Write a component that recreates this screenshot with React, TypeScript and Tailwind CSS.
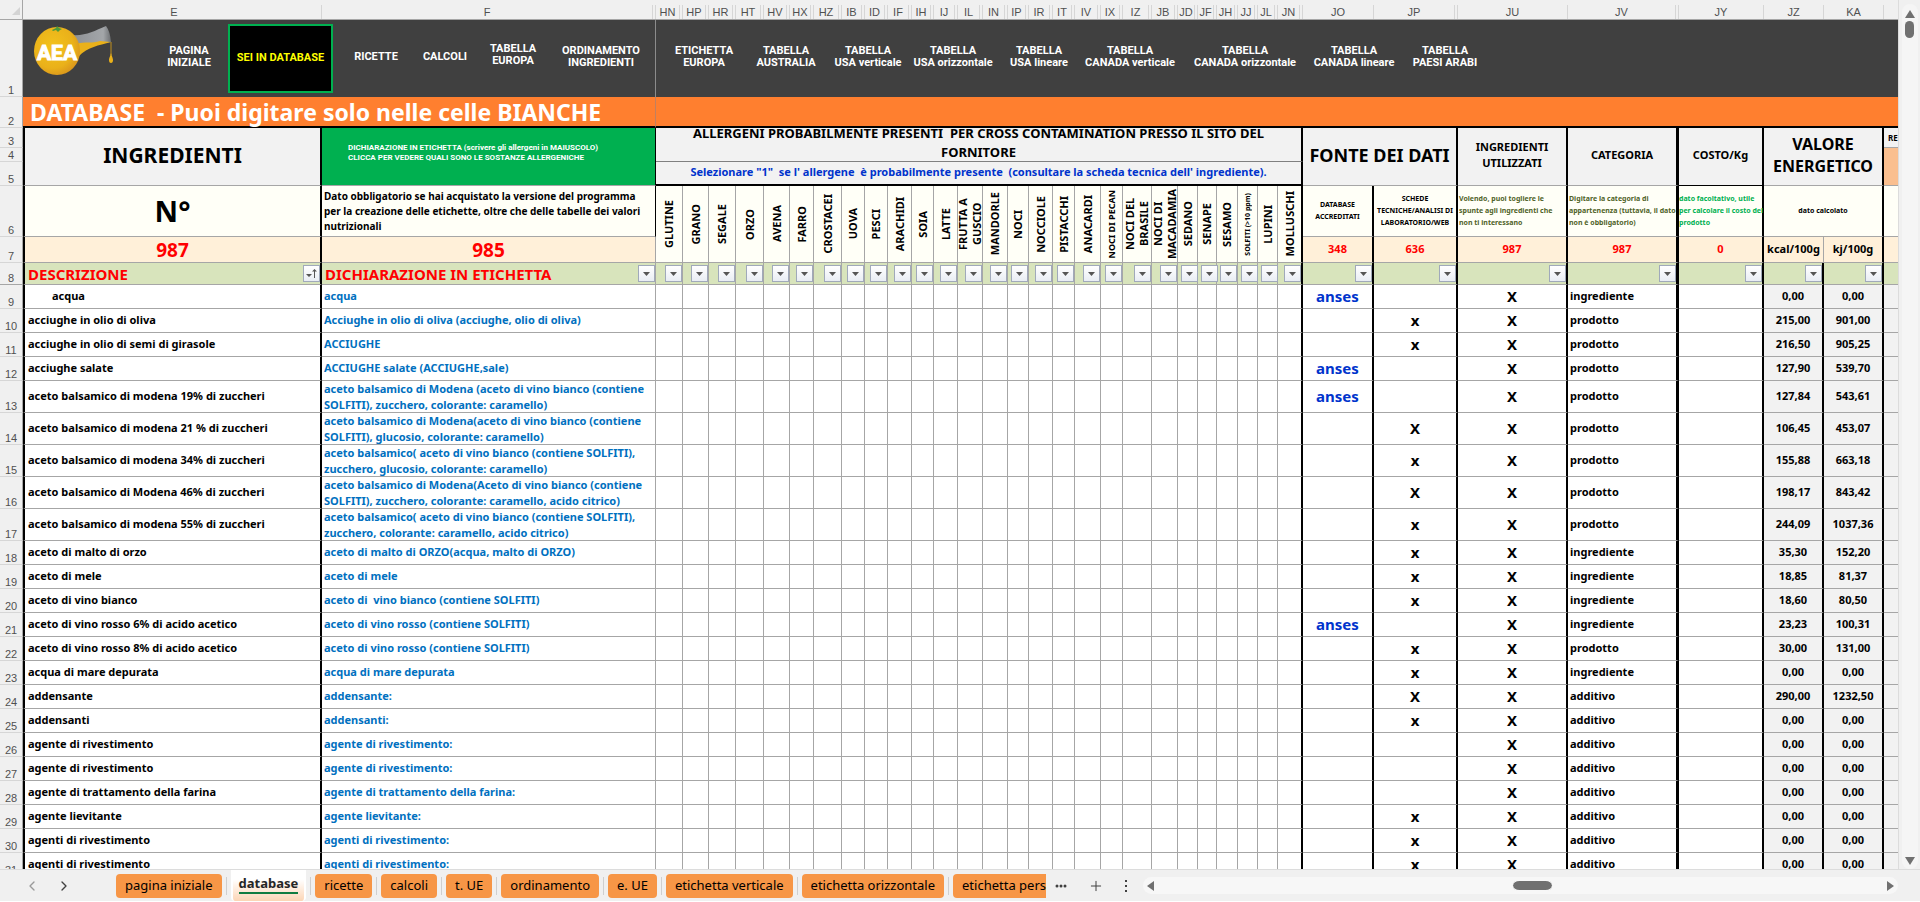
import React from "react";
import { ChevronLeft, ChevronRight, Plus } from "lucide-react";

type Allergen = { col: string; name: string; width: string; text?: string };

const ALLERGENS: Allergen[] = [
  { col: "HN", name: "GLUTINE", width: "w-[27px]" },
  { col: "HP", name: "GRANO", width: "w-[26px]" },
  { col: "HR", name: "SEGALE", width: "w-[27px]" },
  { col: "HT", name: "ORZO", width: "w-[28px]" },
  { col: "HV", name: "AVENA", width: "w-[26px]" },
  { col: "HX", name: "FARRO", width: "w-[24px]" },
  { col: "HZ", name: "CROSTACEI", width: "w-[28px]" },
  { col: "IB", name: "UOVA", width: "w-[23px]" },
  { col: "ID", name: "PESCI", width: "w-[23px]" },
  { col: "IF", name: "ARACHIDI", width: "w-[24px]" },
  { col: "IH", name: "SOIA", width: "w-[22px]" },
  { col: "IJ", name: "LATTE", width: "w-[24px]" },
  { col: "IL", name: "FRUTTA A GUSCIO", width: "w-[25px]" },
  { col: "IN", name: "MANDORLE", width: "w-[25px]" },
  { col: "IP", name: "NOCI", width: "w-[21px]" },
  { col: "IR", name: "NOCCIOLE", width: "w-[24px]" },
  { col: "IT", name: "PISTACCHI", width: "w-[22px]" },
  { col: "IV", name: "ANACARDI", width: "w-[26px]" },
  { col: "IX", name: "NOCI DI PECAN", width: "w-[22px]", text: "text-[9px] font-bold whitespace-nowrap" },
  { col: "IZ", name: "NOCI DEL BRASILE", width: "w-[29px]" },
  { col: "JB", name: "NOCI DI MACADAMIA", width: "w-[26px]" },
  { col: "JD", name: "SEDANO", width: "w-[20px]" },
  { col: "JF", name: "SENAPE", width: "w-[19px]" },
  { col: "JH", name: "SESAMO", width: "w-[21px]" },
  { col: "JJ", name: "SOLFITI (>10 ppm)", width: "w-[20px]", text: "text-[7px] font-bold whitespace-nowrap" },
  { col: "JL", name: "LUPINI", width: "w-[20px]" },
  { col: "JN", name: "MOLLUSCHI", width: "w-[25px]" },
];

const DATA_COLS = [
  { col: "JO", width: "w-[71px]" },
  { col: "JP", width: "w-[84px]" },
  { col: "JU", width: "w-[110px]" },
  { col: "JV", width: "w-[111px]" },
  { col: "JY", width: "w-[85px]" },
  { col: "JZ", width: "w-[60px]" },
  { col: "KA", width: "w-[60px]" },
];

type Row = [desc: string, label: string, anses: boolean, lab: string, cat: string, kcal: string, kj: string];

const ROWS: Row[] = [
  ["acqua", "acqua", true, "", "ingrediente", "0,00", "0,00"],
  ["acciughe in olio di oliva", "Acciughe in olio di oliva (acciughe, olio di oliva)", false, "x", "prodotto", "215,00", "901,00"],
  ["acciughe in olio di semi di girasole", "ACCIUGHE", false, "x", "prodotto", "216,50", "905,25"],
  ["acciughe salate", "ACCIUGHE salate (ACCIUGHE,sale)", true, "", "prodotto", "127,90", "539,70"],
  ["aceto balsamico di modena 19% di zuccheri", "aceto balsamico di Modena (aceto di vino bianco (contiene\nSOLFITI), zucchero, colorante: caramello)", true, "", "prodotto", "127,84", "543,61"],
  ["aceto balsamico di modena 21 % di zuccheri", "aceto balsamico di Modena(aceto di vino bianco (contiene\nSOLFITI), glucosio, colorante: caramello)", false, "X", "prodotto", "106,45", "453,07"],
  ["aceto balsamico di modena 34% di zuccheri", "aceto balsamico( aceto di vino bianco (contiene SOLFITI),\nzucchero, glucosio, colorante: caramello)", false, "x", "prodotto", "155,88", "663,18"],
  ["aceto balsamico di Modena 46% di zuccheri", "aceto balsamico di Modena(Aceto di vino bianco (contiene\nSOLFITI), zucchero, colorante: caramello, acido citrico)", false, "X", "prodotto", "198,17", "843,42"],
  ["aceto balsamico di modena 55% di zuccheri", "aceto balsamico( aceto di vino bianco (contiene SOLFITI),\nzucchero, colorante: caramello, acido citrico)", false, "x", "prodotto", "244,09", "1037,36"],
  ["aceto di malto di orzo", "aceto di malto di ORZO(acqua, malto di ORZO)", false, "x", "ingrediente", "35,30", "152,20"],
  ["aceto di mele", "aceto di mele", false, "x", "ingrediente", "18,85", "81,37"],
  ["aceto di vino bianco", "aceto di  vino bianco (contiene SOLFITI)", false, "x", "ingrediente", "18,60", "80,50"],
  ["aceto di vino rosso 6% di acido acetico", "aceto di vino rosso (contiene SOLFITI)", true, "", "ingrediente", "23,23", "100,31"],
  ["aceto di vino rosso 8% di acido acetico", "aceto di vino rosso (contiene SOLFITI)", false, "x", "prodotto", "30,00", "131,00"],
  ["acqua di mare depurata", "acqua di mare depurata", false, "x", "ingrediente", "0,00", "0,00"],
  ["addensante", "addensante:", false, "X", "additivo", "290,00", "1232,50"],
  ["addensanti", "addensanti:", false, "x", "additivo", "0,00", "0,00"],
  ["agente di rivestimento", "agente di rivestimento:", false, "", "additivo", "0,00", "0,00"],
  ["agente di rivestimento", "agente di rivestimento:", false, "", "additivo", "0,00", "0,00"],
  ["agente di trattamento della farina", "agente di trattamento della farina:", false, "", "additivo", "0,00", "0,00"],
  ["agente lievitante", "agente lievitante:", false, "x", "additivo", "0,00", "0,00"],
  ["agenti di rivestimento", "agenti di rivestimento:", false, "x", "additivo", "0,00", "0,00"],
  ["agenti di rivestimento", "agenti di rivestimento:", false, "x", "additivo", "0,00", "0,00"],
];

const NAV_RIGHT: { lines: string[]; width: string }[] = [
  { lines: ["ETICHETTA", "EUROPA"], width: "w-[88px]" },
  { lines: ["TABELLA", "AUSTRALIA"], width: "w-[76px]" },
  { lines: ["TABELLA", "USA verticale"], width: "w-[88px]" },
  { lines: ["TABELLA", "USA orizzontale"], width: "w-[82px]" },
  { lines: ["TABELLA", "USA lineare"], width: "w-[90px]" },
  { lines: ["TABELLA", "CANADA verticale"], width: "w-[92px]" },
  { lines: ["TABELLA", "CANADA orizzontale"], width: "w-[138px]" },
  { lines: ["TABELLA", "CANADA lineare"], width: "w-[80px]" },
  { lines: ["TABELLA", "PAESI ARABI"], width: "w-[102px]" },
];

const SHEETS = ["ricette", "calcoli", "t. UE", "ordinamento", "e. UE", "etichetta verticale", "etichetta orizzontale"];

const LINE = "border-[#a6a6a6]";

function NavLink({ lines, width }: { lines: string[]; width: string }) {
  return (
    <a
      href="#"
      className={`flex shrink-0 flex-col items-center whitespace-nowrap font-['Roboto',sans-serif] text-[11px] leading-[12px] font-bold text-white ${width}`}
    >
      {lines.map((l) => (
        <span key={l}>{l}</span>
      ))}
    </a>
  );
}

function Logo() {
  return (
    <svg className="h-[56px] w-[84px]" viewBox="0 0 84 56" role="img" aria-label="AEA">
      <defs>
        <radialGradient id="orange" cx="0.4" cy="0.4" r="0.65">
          <stop offset="0" stopColor="#f3c21c" />
          <stop offset="0.7" stopColor="#eab11a" />
          <stop offset="1" stopColor="#d9951c" />
        </radialGradient>
        <linearGradient id="glass" x1="0" y1="0" x2="1" y2="0">
          <stop offset="0" stopColor="#8d9094" />
          <stop offset="0.8" stopColor="#a3a6a9" />
          <stop offset="1" stopColor="#6d7073" />
        </linearGradient>
      </defs>
      <path d="M40 10 C54 11 62 6 74 1 Q78 6 79 17 Q62 20 44 22 Z" fill="url(#glass)" />
      <path d="M43 19 C54 16 60 19 68 16 L79 17 C66 21 57 21 46 32 Z" fill="#eab11a" />
      <ellipse cx="25" cy="26" rx="23" ry="24" fill="url(#orange)" />
      <path d="M20 5 L24 3 L25 1 L27 3 L30 4 L28 5 L26 7 L24 5 L21 6 Z" fill="#4b9b3b" />
      <path d="M79 17 L79 30" stroke="#c08f1c" strokeWidth="1" />
      <path d="M79 28 C80 32 81 33 81 35 A2 3 0 0 1 77 35 C77 33 78 32 79 28 Z" fill="#eab11a" />
      <text
        x="25"
        y="35"
        fontSize="21"
        fill="#fff"
        stroke="#fff"
        strokeWidth="1"
        textAnchor="middle"
        fontFamily="'Liberation Sans Narrow', Roboto, sans-serif"
        fontWeight="700"
      >
        AEA
      </text>
    </svg>
  );
}

function FilterButton({ label, sorted }: { label: string; sorted?: boolean }) {
  return (
    <button
      type="button"
      aria-label={`Filtro ${label}`}
      className="flex h-[17px] w-[17px] shrink-0 items-center justify-center border border-[#a0a9ba] bg-linear-to-b from-white to-[#e9edf4]"
    >
      {sorted ? (
        <svg width="11" height="11" viewBox="0 0 11 11" fill="#555">
          <path d="M0 6h6L3 9zM8 3h1v7H8zM6 3.500L8.500 1l2.500 2.500z" />
        </svg>
      ) : (
        <svg width="7" height="4" viewBox="0 0 7 4" fill="#555">
          <path d="M0 0h7L3.500 4z" />
        </svg>
      )}
    </button>
  );
}

function FilterCell({ label, className, children, sorted }: { label: string; className: string; children?: React.ReactNode; sorted?: boolean }) {
  return (
    <td className={`border-b bg-[#d8e4bc] p-0 align-middle ${LINE} ${className}`}>
      <div className="flex items-center justify-between">
        <span className="pl-[3px] text-[15px] leading-[18px] font-bold whitespace-nowrap text-[#ff0000]">{children}</span>
        <FilterButton label={label} sorted={sorted} />
      </div>
    </td>
  );
}

function RowHead({ n, height, last }: { n: number; height: string; last?: boolean }) {
  return (
    <th
      scope="row"
      className={`border-r border-b border-r-[#a6a6a6] bg-[#f0f0f0] p-0 text-center align-bottom font-['Liberation_Sans',sans-serif] text-[11px] leading-[12px] font-normal text-[#505050] ${height} ${last ? "border-b-[#a6a6a6]" : "border-b-[#d6d6d6]"}`}
    >
      {n}
    </th>
  );
}

function ColHead({ name, split, className = "" }: { name: string; split?: boolean; className?: string }) {
  return (
    <th
      scope="col"
      className={`h-[20px] border-b border-b-[#a6a6a6] bg-[#f0f0f0] p-0 align-bottom font-['Liberation_Sans',sans-serif] text-[11px] leading-[14px] font-normal text-[#505050] ${className}`}
    >
      <div className="flex h-[14px] justify-end">
        <span className={`min-w-0 flex-1 border-r border-[#d6d6d6] text-center ${split ? "mr-[2px]" : ""}`}>
          <span className="flex justify-center">{name}</span>
        </span>
        {split && <span className="w-px bg-[#d6d6d6]" />}
      </div>
    </th>
  );
}

const HEAD = "border-b bg-[#f2f2f2] p-0 pb-[3px] text-center align-middle font-bold";
const NOTE = "border-b bg-[#fffff7] p-0 align-middle font-bold";
const COUNT = "border-b bg-[#fff0d9] p-0 text-center align-middle font-bold";

export default function App() {
  return (
    <div className="flex h-screen flex-col overflow-hidden bg-white font-['Noto_Sans',sans-serif] text-black">
      <div className="flex min-h-0 flex-1 border-b border-[#dcdcdc] bg-[#f0f0f0]">
        <main className="min-w-0 flex-1 overflow-hidden bg-white">
          <table className="w-full table-fixed border-separate border-spacing-0">
            <colgroup>
              <col className="w-[23px]" />
              <col className="w-[299px]" />
              <col className="w-[334px]" />
              {ALLERGENS.map((a) => (
                <col key={a.col} className={a.width} />
              ))}
              {DATA_COLS.map((c) => (
                <col key={c.col} className={c.width} />
              ))}
              <col />
            </colgroup>
            <thead>
              <tr>
                <td className="h-[20px] border-r border-b border-[#a6a6a6] bg-[#f0f0f0] p-0 align-bottom">
                  <svg className="mb-1 ml-3" width="8" height="8" viewBox="0 0 8 8" fill="#d4d4d4">
                    <path d="M8 0v8H0z" />
                  </svg>
                </td>
                <ColHead name="E" className="pl-1!" />
                <ColHead name="F" split />
                {ALLERGENS.map((a) => (
                  <ColHead key={a.col} name={a.col} split />
                ))}
                {DATA_COLS.map((c) => (
                  <ColHead key={c.col} name={c.col} split={c.col === "JP" || c.col === "JV"} />
                ))}
                <td className="border-b border-[#a6a6a6] bg-[#f0f0f0] p-0" />
              </tr>
            </thead>
            <tbody>
              <tr>
                <RowHead n={1} height="h-[77px]" />
                <td colSpan={2} className="border-r border-[#8c8c8c] bg-[#404040] p-0 align-middle">
                  <nav className="flex items-center">
                    <div className="w-[127px] shrink-0 pb-3 pl-[9px]">
                      <Logo />
                    </div>
                    <NavLink lines={["PAGINA", "INIZIALE"]} width="w-[78px] pb-1" />
                    <div className="flex w-[109px] shrink-0 justify-center pr-1">
                      <a
                        href="#"
                        className="flex h-[69px] w-[105px] items-center justify-center border-2 border-[#00b050] bg-black font-['Roboto',sans-serif] text-[11px] font-bold whitespace-nowrap text-[#ffff00]"
                      >
                        SEI IN DATABASE
                      </a>
                    </div>
                    <NavLink lines={["RICETTE"]} width="w-[78px] pb-1" />
                    <NavLink lines={["CALCOLI"]} width="w-[60px] pb-1" />
                    <NavLink lines={["TABELLA", "EUROPA"]} width="w-[76px] pb-2" />
                    <NavLink lines={["ORDINAMENTO", "INGREDIENTI"]} width="w-[100px] pb-1" />
                  </nav>
                </td>
                <td colSpan={35} className="bg-[#404040] p-0 align-middle">
                  <nav className="flex items-center pb-1 pl-1">
                    {NAV_RIGHT.map((n) => (
                      <NavLink key={n.lines[1]} {...n} />
                    ))}
                  </nav>
                </td>
              </tr>
              <tr>
                <RowHead n={2} height="h-[31px]" />
                <td colSpan={2} className="border-r border-b-2 border-r-[#c08060] border-b-black bg-[#ff7f2f] p-0 pl-[7px] align-middle">
                  <h1 className="text-[23px] leading-[28px] font-bold whitespace-pre text-white">DATABASE  - Puoi digitare solo nelle celle BIANCHE</h1>
                </td>
                <td colSpan={35} className="border-b-2 border-black bg-[#ff7f2f] p-0" />
              </tr>
              <tr>
                <RowHead n={3} height="h-[20px]" />
                <td rowSpan={3} className={`border-x-2 border-x-black border-b-[#a6a6a6] text-[21px] leading-[28px] ${HEAD}`}>
                  INGREDIENTI
                </td>
                <td rowSpan={3} className="border-r border-b border-r-black border-b-[#a6a6a6] bg-[#00b050] p-0 align-middle">
                  <a href="#" className="block pb-2 pl-[26px] font-['Roboto',sans-serif] text-[8px] leading-[10px] font-bold whitespace-nowrap text-white">
                    DICHIARAZIONE IN ETICHETTA (scrivere gli allergeni in MAIUSCOLO)
                    <br />
                    CLICCA PER VEDERE QUALI SONO LE SOSTANZE ALLERGENICHE
                  </a>
                </td>
                <td rowSpan={2} colSpan={27} className={`border-r-2 border-r-black border-b-[#808080] text-[13px] leading-[19px] ${HEAD}`}>
                  <div className="flex h-[30px] items-center justify-center whitespace-pre">
                    <span>
                      ALLERGENI PROBABILMENTE PRESENTI{"  "}PER CROSS CONTAMINATION PRESSO IL SITO DEL
                      <br />
                      FORNITORE
                    </span>
                  </div>
                </td>
                <td rowSpan={3} colSpan={2} className={`border-r-2 border-r-black border-b-[#a6a6a6] text-[18px] leading-[24px] ${HEAD}`}>
                  FONTE DEI DATI
                </td>
                <td rowSpan={3} className={`border-r-2 border-r-black border-b-[#a6a6a6] text-[11px] leading-[16px] ${HEAD}`}>
                  INGREDIENTI
                  <br />
                  UTILIZZATI
                </td>
                <td rowSpan={3} className={`border-r-3 border-r-black border-b-[#a6a6a6] text-[11px] leading-[16px] ${HEAD}`}>CATEGORIA</td>
                <td rowSpan={3} className={`border-r-2 border-r-black border-b-black text-[11px] leading-[16px] ${HEAD}`}>COSTO/Kg</td>
                <td rowSpan={3} colSpan={2} className={`border-r-2 border-r-black border-b-[#a6a6a6] text-[16px] leading-[22px] ${HEAD}`}>
                  VALORE
                  <br />
                  ENERGETICO
                </td>
                <td className="overflow-hidden border-b border-[#a6a6a6] bg-[#f2f2f2] p-0 pl-1 text-[8px] leading-[14px] font-bold">RE</td>
              </tr>
              <tr>
                <RowHead n={4} height="h-[14px]" />
                <td rowSpan={2} className="border-b border-[#a6a6a6] bg-[#fabf8f] p-0" />
              </tr>
              <tr>
                <RowHead n={5} height="h-[24px]" />
                <td colSpan={27} className={`border-r-2 border-b-2! border-black text-[11px] leading-[18px] whitespace-pre text-[#0033cc] ${HEAD}`}>
                  Selezionare "1"  se l' allergene  è probabilmente presente  (consultare la scheda tecnica dell' ingrediente).
                </td>
              </tr>
              <tr>
                <RowHead n={6} height="h-[51px]" />
                <td className={`border-x-2 border-x-black border-b-[#a6a6a6] text-center text-[29px] leading-[40px] ${NOTE}`}>N°</td>
                <td className={`border-r border-r-black border-b-[#a6a6a6] pl-0.5! text-[10px] leading-[15px] whitespace-nowrap ${NOTE}`}>
                  Dato obbligatorio se hai acquistato la versione del programma
                  <br />
                  per la creazione delle etichette, oltre che delle tabelle dei valori
                  <br />
                  nutrizionali
                </td>
                {ALLERGENS.map((a, i) => (
                  <th
                    key={a.col}
                    rowSpan={2}
                    scope="col"
                    className={`border-b bg-[#fffff7] p-0 align-middle ${LINE} ${i === 26 ? "border-r-2 border-r-black" : "border-r"}`}
                  >
                    <div className="flex h-[74px] items-center justify-center">
                      <span className={`max-h-[74px] rotate-180 text-center leading-[14px] [writing-mode:vertical-rl] ${a.text ?? "text-[11px] font-bold"}`}>
                        {a.name}
                      </span>
                    </div>
                  </th>
                ))}
                <td className={`border-r-2 border-r-black border-b-[#a6a6a6] text-center text-[7px] leading-[12px] ${NOTE}`}>
                  DATABASE
                  <br />
                  ACCREDITATI
                </td>
                <td className={`border-r-2 border-r-black border-b-[#a6a6a6] text-center text-[7px] leading-[12px] whitespace-nowrap ${NOTE}`}>
                  SCHEDE
                  <br />
                  TECNICHE/ANALISI DI
                  <br />
                  LABORATORIO/WEB
                </td>
                <td className={`border-r-2 border-r-black border-b-[#a6a6a6] pl-px! text-[7px] leading-[12px] whitespace-nowrap text-[#4f6228] ${NOTE}`}>
                  Volendo, puoi togliere le
                  <br />
                  spunte agli ingredienti che
                  <br />
                  non ti interessano
                </td>
                <td className={`border-r-3 border-r-black border-b-[#a6a6a6] pl-px! text-[7px] leading-[12px] whitespace-nowrap text-[#4f6228] ${NOTE}`}>
                  Digitare la categoria di
                  <br />
                  appartenenza (tuttavia, il dato
                  <br />
                  non è obbligatorio)
                </td>
                <td className={`border-r-2 border-r-black border-b-[#a6a6a6] text-[7px] leading-[12px] whitespace-nowrap text-[#00b050] ${NOTE}`}>
                  dato facoltativo, utile
                  <br />
                  per calcolare il costo del
                  <br />
                  prodotto
                </td>
                <td colSpan={2} className={`border-r-2 border-r-black border-b-[#a6a6a6] text-center text-[7px] ${NOTE}`}>
                  dato calcolato
                </td>
                <td className={`border-b-[#a6a6a6] ${NOTE}`} />
              </tr>
              <tr>
                <RowHead n={7} height="h-[26px]" />
                <td className={`border-x-2 border-x-black border-b-[#a6a6a6] text-[19px] leading-[24px] text-[#ff0000] ${COUNT}`}>987</td>
                <td className={`border-r border-[#a6a6a6] text-[19px] leading-[24px] text-[#ff0000] ${COUNT}`}>985</td>
                <td className={`border-r-2 border-r-black border-b-[#a6a6a6] text-[11px] text-[#ff0000] ${COUNT}`}>348</td>
                <td className={`border-r-2 border-r-black border-b-[#a6a6a6] text-[11px] text-[#ff0000] ${COUNT}`}>636</td>
                <td className={`border-r-2 border-r-black border-b-[#a6a6a6] text-[11px] text-[#ff0000] ${COUNT}`}>987</td>
                <td className={`border-r-3 border-r-black border-b-[#a6a6a6] text-[11px] text-[#ff0000] ${COUNT}`}>987</td>
                <td className={`border-r-2 border-r-black border-b-[#a6a6a6] text-[11px] text-[#ff0000] ${COUNT}`}>0</td>
                <td className={`border-r border-[#a6a6a6] text-[11px] ${COUNT}`}>kcal/100g</td>
                <td className={`border-r-2 border-r-black border-b-[#a6a6a6] text-[11px] ${COUNT}`}>kj/100g</td>
                <td className={`border-b-[#a6a6a6] ${COUNT}`} />
              </tr>
              <tr>
                <RowHead n={8} height="h-[22px]" last />
                <FilterCell label="descrizione" className="border-x-2 border-x-black" sorted>
                  DESCRIZIONE
                </FilterCell>
                <FilterCell label="dichiarazione in etichetta" className="border-r">
                  DICHIARAZIONE IN ETICHETTA
                </FilterCell>
                {ALLERGENS.map((a, i) => (
                  <FilterCell key={a.col} label={a.name} className={i === 26 ? "border-r-2 border-r-black" : "border-r"} />
                ))}
                {DATA_COLS.map((c) => (
                  <FilterCell key={c.col} label={c.col} className={c.col === "JV" ? "border-r-3 border-r-black" : "border-r-2 border-r-black"} />
                ))}
                <td className="border-b border-[#a6a6a6] bg-[#d8e4bc] p-0" />
              </tr>
              {ROWS.map(([desc, label, anses, lab, cat, kcal, kj], r) => {
                const cell = "border-b border-b-[#a6a6a6] p-0 pb-[2px] align-middle font-bold text-[11px] leading-[16px]";
                return (
                  <tr key={r}>
                    <RowHead n={r + 9} height={label.includes("\n") ? "h-[32px]" : "h-[24px]"} />
                    <td className={`border-x-2 border-x-black ${cell} ${r === 0 ? "pl-[27px]!" : "pl-[3px]!"}`}>{desc}</td>
                    <td className={`border-r border-r-[#a6a6a6] pl-0.5! whitespace-pre text-[#0070c0] ${cell}`}>
                      <div className="max-h-[29px]">{label}</div>
                    </td>
                    {ALLERGENS.map((a, i) => (
                      <td key={a.col} className={`${cell} ${i === 26 ? "border-r-2 border-r-black" : "border-r border-r-[#a6a6a6]"}`} />
                    ))}
                    <td className={`border-r-2 border-r-black text-center text-[15px]! text-[#0033cc] ${cell}`}>{anses ? "anses" : ""}</td>
                    <td className={`border-r-2 border-r-black text-center text-[15px]! ${cell}`}>{lab}</td>
                    <td className={`border-r-2 border-r-black text-center text-[15px]! ${cell}`}>X</td>
                    <td className={`border-r-3 border-r-black pl-0.5! ${cell}`}>{cat}</td>
                    <td className={`border-r-2 border-r-black ${cell}`} />
                    <td className={`border-r-2 border-r-black bg-[#f2f2f2] text-center ${cell}`}>{kcal}</td>
                    <td className={`border-r-2 border-r-black bg-[#f2f2f2] text-center ${cell}`}>{kj}</td>
                    <td className={`bg-[#f2f2f2] ${cell}`} />
                  </tr>
                );
              })}
            </tbody>
          </table>
        </main>
        <aside className="flex w-[22px] shrink-0 flex-col items-center border-l border-[#dcdcdc] pt-1">
          <div className="flex w-4 flex-1 flex-col items-center rounded-full bg-[#f5f5f5] pt-1.5 pb-1">
            <button type="button" aria-label="Scorri su">
              <svg width="10" height="8" viewBox="0 0 10 8" fill="#707070">
                <path d="M5 0l5 8H0z" />
              </svg>
            </button>
            <div className="mt-[3px] h-[17px] w-[9px] rounded-full bg-[#707070]" />
            <button type="button" aria-label="Scorri giù" className="mt-auto">
              <svg width="10" height="8" viewBox="0 0 10 8" fill="#707070">
                <path d="M5 8l5-8H0z" />
              </svg>
            </button>
          </div>
        </aside>
      </div>

      <footer className="mb-px flex h-[31px] shrink-0 items-center bg-[#f0f0f0] pr-[22px]">
        <div className="flex w-[116px] shrink-0 items-center gap-4 pl-6">
          <button type="button" aria-label="Foglio precedente">
            <ChevronLeft size={16} color="#9a9a9a" />
          </button>
          <button type="button" aria-label="Foglio successivo">
            <ChevronRight size={16} color="#404040" />
          </button>
        </div>
        <div className="flex w-[930px] shrink-0 items-center overflow-hidden text-[13px] whitespace-nowrap">
          <button type="button" className="h-6 shrink-0 rounded-sm bg-[#f79646] px-[9px]">
            pagina iniziale
          </button>
          <span className="ml-1 h-[18px] w-px shrink-0 bg-[#cfcfcf]" />
          <button
            type="button"
            aria-current="page"
            className="ml-1 flex h-[31px] shrink-0 flex-col items-center rounded-b-sm border-x-2 border-white bg-linear-to-b from-white from-30% to-[#fcd5b5] px-1.5 pt-1 text-[13px] leading-[18px] font-bold text-[#262626]"
          >
            <span className="border-b-2 border-[#107c41]">database</span>
          </button>
          {SHEETS.map((s) => (
            <React.Fragment key={s}>
              <span className="ml-1 h-[18px] w-px shrink-0 bg-[#cfcfcf]" />
              <button type="button" className="ml-1 h-6 shrink-0 rounded-sm bg-[#f79646] px-[9px]">
                {s}
              </button>
            </React.Fragment>
          ))}
          <span className="ml-1 h-[18px] w-px shrink-0 bg-[#cfcfcf]" />
          <button type="button" className="ml-1 h-6 shrink-0 rounded-sm bg-[#f79646] px-[9px]">
            etichetta personalizzata
          </button>
        </div>
        <div className="flex w-[97px] shrink-0 items-center justify-between pr-[15px] pl-[9px]">
          <button type="button" aria-label="Altri fogli">
            <svg width="12" height="4" viewBox="0 0 12 4" fill="#404040">
              <circle cx="2" cy="2" r="1.500" />
              <circle cx="6" cy="2" r="1.500" />
              <circle cx="10" cy="2" r="1.500" />
            </svg>
          </button>
          <button type="button" aria-label="Nuovo foglio">
            <Plus size={16} color="#404040" strokeWidth={1.5} />
          </button>
          <svg width="4" height="12" viewBox="0 0 4 12" fill="#404040">
            <rect x="1" y="0" width="2" height="2" />
            <rect x="1" y="5" width="2" height="2" />
            <rect x="1" y="10" width="2" height="2" />
          </svg>
        </div>
        <div className="flex h-[17px] min-w-0 flex-1 items-center rounded-full bg-[#f7f7f7] px-1">
          <button type="button" aria-label="Scorri a sinistra">
            <svg width="7" height="10" viewBox="0 0 7 10" fill="#707070">
              <path d="M7 0v10L0 5z" />
            </svg>
          </button>
          <div className="flex min-w-0 flex-1">
            <div className="w-[49%] shrink-0" />
            <div className="h-[13px] w-[39px] rounded-full border-y-2 border-[#f7f7f7] bg-[#707070]" />
          </div>
          <button type="button" aria-label="Scorri a destra">
            <svg width="7" height="10" viewBox="0 0 7 10" fill="#707070">
              <path d="M0 0v10l7-5z" />
            </svg>
          </button>
        </div>
      </footer>
    </div>
  );
}
